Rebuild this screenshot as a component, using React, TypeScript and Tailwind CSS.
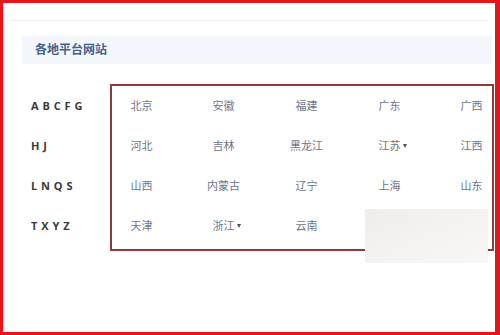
const rows: { letters: string; items: { name: string; more?: boolean }[] }[] = [
  {
    letters: "A B C F G",
    items: [{ name: "北京" }, { name: "安徽" }, { name: "福建" }, { name: "广东" }, { name: "广西" }],
  },
  {
    letters: "H J",
    items: [{ name: "河北" }, { name: "吉林" }, { name: "黑龙江" }, { name: "江苏", more: true }, { name: "江西" }],
  },
  {
    letters: "L N Q S",
    items: [{ name: "山西" }, { name: "内蒙古" }, { name: "辽宁" }, { name: "上海" }, { name: "山东" }],
  },
  {
    letters: "T X Y Z",
    items: [{ name: "天津" }, { name: "浙江", more: true }, { name: "云南" }],
  },
]

function Province({ name, more }: { name: string; more?: boolean }) {
  return (
    <div className="flex h-[40px] items-center">
      <span className="relative flex w-[23px] justify-center whitespace-nowrap">
        {name}
        {more && (
          <span className="absolute left-[25px] top-[6px] h-0 w-0 border-x-[2.5px] border-t-[4px] border-x-transparent border-t-[#4d5360]" />
        )}
      </span>
    </div>
  )
}

export default function App() {
  return (
    <div
      className="relative h-[335px] w-[500px] overflow-hidden border-[3px] border-r-[5px] border-[#e8131b] bg-white"
      style={{ fontFamily: '"Noto Sans", "Noto Sans CJK SC", sans-serif' }}
    >
      {/* faint top rule */}
      <div className="ml-[7px] mr-[6px] mt-[17px] h-px bg-[#eef1f5]" />

      {/* section header */}
      <div className="ml-[19px] mr-[3px] mt-[15px] flex h-[28px] items-center bg-[#f3f6fb] pl-[13px]">
        <span className="text-[12px] font-bold text-[#45618c]">各地平台网站</span>
      </div>

      <div className="mt-[20px] flex">
        {/* letter index */}
        <div className="w-[107px] pl-[28px] pt-[2px]">
          {rows.map((r) => (
            <div
              key={r.letters}
              className="flex h-[40px] items-center text-[11px] font-bold tracking-[0.5px] text-[#3a3a3a]"
              style={{ fontFamily: '"Open Sans", sans-serif' }}
            >
              {r.letters}
            </div>
          ))}
        </div>

        {/* provinces */}
        <div className="h-[167px] w-[384px] border-2 border-[#8e3b3b] pl-[18px]">
          {rows.map((r) => (
            <div
              key={r.letters}
              className="grid grid-cols-[82px_83px_83px_82px_40px] text-[11px] text-[#6e7689]"
            >
              {r.items.map((p) => (
                <Province key={p.name} name={p.name} more={p.more} />
              ))}
            </div>
          ))}
        </div>
      </div>

      {/* faded patch over bottom right corner */}
      <div className="absolute left-[362px] top-[206px] h-[54px] w-[123px] bg-gradient-to-br from-[#efedeb] via-[#f4f3f2] to-[#f8f7f6]" />
    </div>
  )
}
